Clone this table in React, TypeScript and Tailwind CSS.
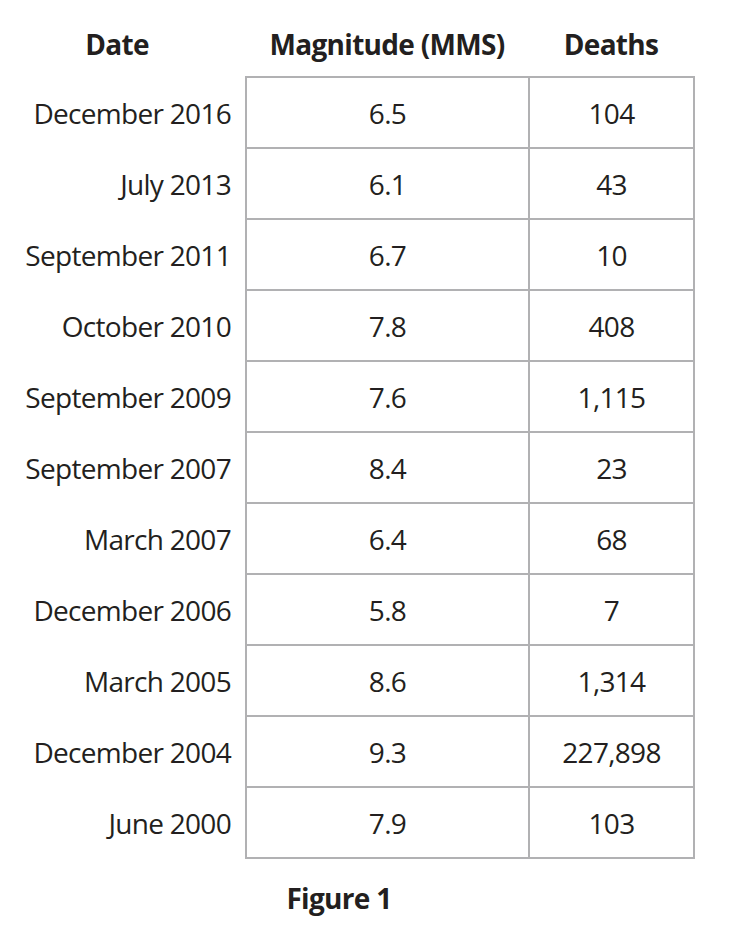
import React from "react";

const rows = [
  ["December 2016", "6.5", "104"],
  ["July 2013", "6.1", "43"],
  ["September 2011", "6.7", "10"],
  ["October 2010", "7.8", "408"],
  ["September 2009", "7.6", "1,115"],
  ["September 2007", "8.4", "23"],
  ["March 2007", "6.4", "68"],
  ["December 2006", "5.8", "7"],
  ["March 2005", "8.6", "1,314"],
  ["December 2004", "9.3", "227,898"],
  ["June 2000", "7.9", "103"],
];

export default function App() {
  return (
    <div
      className="w-[730px] h-[948px] bg-white text-[#231f20] text-[28px] tracking-[-0.025em]"
      style={{ fontFamily: '"Open Sans", "Noto Sans", sans-serif' }}
    >
      {/* header */}
      <div className="flex h-[76px] pt-[12px] font-bold">
        <div className="w-[234px] flex items-center justify-center">Date</div>
        <div className="w-[306px] flex items-center justify-center">Magnitude (MMS)</div>
        <div className="w-[142px] flex items-center justify-center">Deaths</div>
      </div>

      <div className="flex">
        <div className="w-[245px] flex flex-col pt-[2px]">
          {rows.map((r) => (
            <div key={r[0]} className="h-[69px] mb-[2px] flex items-center justify-end pr-[14px]">
              {r[0]}
            </div>
          ))}
        </div>
        <div className="w-[450px] border-2 border-b-0 border-[#b1b1b3]">
          {rows.map((r) => (
            <div key={r[0]} className="flex h-[71px] border-b-2 border-[#b1b1b3]">
              <div className="w-[283px] border-r-2 border-[#b1b1b3] flex items-center justify-center">
                {r[1]}
              </div>
              <div className="flex-1 flex items-center justify-center">{r[2]}</div>
            </div>
          ))}
        </div>
      </div>

      <div className="w-[678px] mt-[18px] text-center font-bold">Figure 1</div>
    </div>
  );
}
